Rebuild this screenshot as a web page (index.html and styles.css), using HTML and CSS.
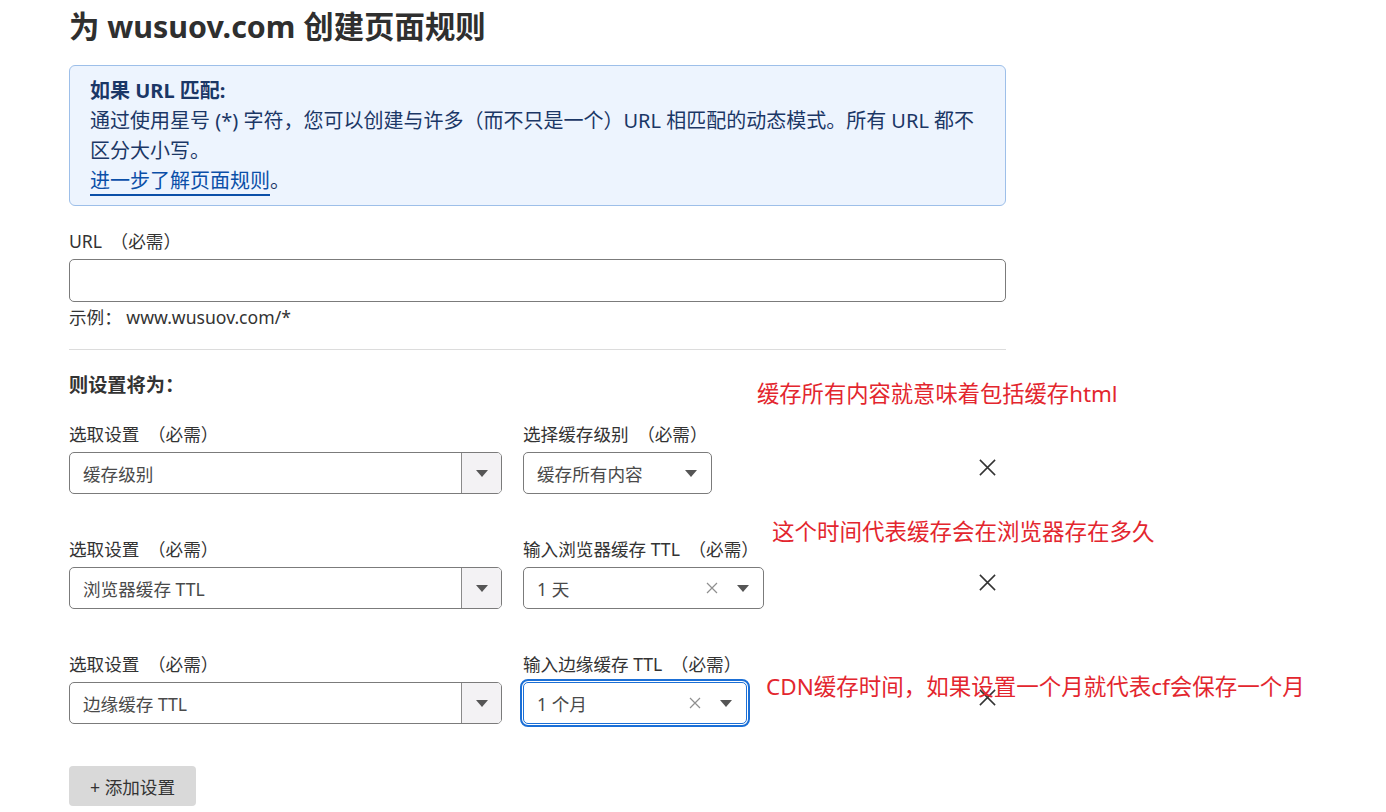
FILE: index.html
```html
<!DOCTYPE html>
<html lang="zh-CN">
<head>
<meta charset="utf-8">
<title>为 wusuov.com 创建页面规则</title>
<link rel="stylesheet" href="styles.css">
</head>
<body>
<div class="page">
  <h1 class="title">为 wusuov.com 创建页面规则</h1>

  <div class="info">
    <div class="info-head">如果 URL 匹配:</div>
    <p class="info-text">通过使用星号 (*) 字符，您可以创建与许多（而不只是一个）URL 相匹配的动态模式。所有 URL 都不区分大小写。</p>
    <p class="info-text"><a class="link" href="#">进一步了解页面规则</a>。</p>
  </div>

  <label class="label url-label">URL <span class="req">（必需）</span></label>
  <div class="text-input"></div>
  <div class="example">示例：&nbsp;www.wusuov.com/*</div>

  <div class="divider"></div>

  <div class="section-title">则设置将为：</div>

  <div class="rule">
    <div class="field">
      <div class="label">选取设置 <span class="req">（必需）</span></div>
      <div class="select big">
        <span class="value">缓存级别</span>
        <span class="btn"><span class="tri"></span></span>
      </div>
    </div>
    <div class="field">
      <div class="label">选择缓存级别 <span class="req">（必需）</span></div>
      <div class="select small w189">
        <span class="value">缓存所有内容</span>
        <span class="tri"></span>
      </div>
    </div>
    <div class="remove"><svg viewBox="0 0 20 20" width="20" height="20"><path d="M2 2 L18 18 M18 2 L2 18" stroke="#333" stroke-width="1.6" fill="none"/></svg></div>
  </div>

  <div class="rule">
    <div class="field">
      <div class="label">选取设置 <span class="req">（必需）</span></div>
      <div class="select big">
        <span class="value">浏览器缓存 TTL</span>
        <span class="btn"><span class="tri"></span></span>
      </div>
    </div>
    <div class="field">
      <div class="label">输入浏览器缓存 TTL <span class="req">（必需）</span></div>
      <div class="select small w241">
        <span class="value">1 天</span>
        <span class="clear"><svg viewBox="0 0 12 12" width="12" height="12"><path d="M1 1 L11 11 M11 1 L1 11" stroke="#8f8f8f" stroke-width="1.2" fill="none"/></svg></span>
        <span class="tri"></span>
      </div>
    </div>
    <div class="remove"><svg viewBox="0 0 20 20" width="20" height="20"><path d="M2 2 L18 18 M18 2 L2 18" stroke="#333" stroke-width="1.6" fill="none"/></svg></div>
  </div>

  <div class="rule">
    <div class="field">
      <div class="label">选取设置 <span class="req">（必需）</span></div>
      <div class="select big">
        <span class="value">边缘缓存 TTL</span>
        <span class="btn"><span class="tri"></span></span>
      </div>
    </div>
    <div class="field">
      <div class="label">输入边缘缓存 TTL <span class="req">（必需）</span></div>
      <div class="select small w224 focused">
        <span class="value">1 个月</span>
        <span class="clear"><svg viewBox="0 0 12 12" width="12" height="12"><path d="M1 1 L11 11 M11 1 L1 11" stroke="#8f8f8f" stroke-width="1.2" fill="none"/></svg></span>
        <span class="tri"></span>
      </div>
    </div>
    <div class="remove"><svg viewBox="0 0 20 20" width="20" height="20"><path d="M2 2 L18 18 M18 2 L2 18" stroke="#333" stroke-width="1.6" fill="none"/></svg></div>
  </div>

  <button class="add-btn">+ 添加设置</button>

  <div class="note note1">缓存所有内容就意味着包括缓存html</div>
  <div class="note note2">这个时间代表缓存会在浏览器存在多久</div>
  <div class="note note3">CDN缓存时间，如果设置一个月就代表cf会保存一个月</div>
</div>
</body>
</html>
```
FILE: styles.css
```css
* { box-sizing: border-box; }
html, body {
  margin: 0;
  padding: 0;
  background: #ffffff;
}
body {
  font-family: "Noto Sans", "Noto Sans CJK SC", sans-serif;
  color: #333333;
  font-size: 17.6px;
}
.page {
  position: relative;
  width: 1386px;
  height: 812px;
  padding-left: 69px;
  padding-top: 8px;
  overflow: hidden;
}
.title {
  margin: 0;
  font-size: 30.4px;
  line-height: 38px;
  font-weight: 700;
  color: #2f2f2f;
  height: 57px;
}
.info {
  width: 937px;
  background: #edf4fe;
  border: 1px solid #9dbfe9;
  border-radius: 6px;
  padding: 10px 20px 9px 20px;
  color: #1b3766;
  font-size: 20px;
  line-height: 30px;
}
.info-head { font-weight: 700; }
.info-text { margin: 0; }
.link {
  color: #0b4fa8;
  text-decoration: none;
  border-bottom: 2px solid #0b4fa8;
}
.label {
  display: block;
  font-size: 17.6px;
  line-height: 26px;
  color: #333;
  margin-bottom: 5px;
}
.url-label { margin-top: 22px; }
.req { margin-left: 4px; }
.text-input {
  width: 937px;
  height: 43px;
  border: 1px solid #7b7b7b;
  border-radius: 5px;
}
.example {
  margin-top: 2px;
  line-height: 26px;
  font-size: 17.6px;
  color: #333;
}
.divider {
  width: 937px;
  height: 1px;
  background: #dcdcdc;
  margin-top: 19px;
}
.section-title {
  margin-top: 20px;
  font-weight: 700;
  font-size: 19.2px;
  line-height: 30px;
  color: #333;
}
.rule {
  display: grid;
  grid-template-columns: 433px 433px 20px;
  column-gap: 21px;
  margin-top: 21px;
  align-items: end;
}
.rule + .rule { margin-top: 42px; }
.field { display: flex; flex-direction: column; }
.select {
  height: 42px;
  border: 1px solid #7b7b7b;
  border-radius: 5px;
  display: flex;
  align-items: center;
  color: #4a4a4a;
  font-size: 17.6px;
  background: #fff;
}
.select .value { flex: 1; padding-left: 13px; white-space: nowrap; }
.select.big .btn {
  width: 40px;
  height: 100%;
  border-left: 1px solid #8a8a8a;
  background: #f3f2f4;
  border-radius: 0 4px 4px 0;
  display: flex;
  align-items: center;
  justify-content: center;
}
.tri {
  width: 0;
  height: 0;
  border-left: 6px solid transparent;
  border-right: 6px solid transparent;
  border-top: 7px solid #555;
}
.select.small .tri { margin-right: 14px; }
.clear {
  display: flex;
  align-items: center;
  margin-right: 19px;
}
.w189 { width: 189px; }
.w241 { width: 241px; }
.w224 { width: 224px; }
.focused {
  border: 1px solid #1b6fd6;
  outline: 2px solid #1b6fd6;
  outline-offset: 1px;
}
.remove {
  height: 42px;
  display: flex;
  align-items: center;
  justify-content: center;
  padding-bottom: 12px;
}
.remove svg { width: 19px; height: 19px; }
.add-btn {
  display: block;
  margin-top: 42px;
  width: 127px;
  height: 40px;
  border: none;
  border-radius: 4px;
  background: #d9d9d9;
  color: #333;
  font-family: "Noto Sans", "Noto Sans CJK SC", sans-serif;
  font-size: 17.6px;
  text-align: left;
  padding-left: 21px;
}
.note {
  position: absolute;
  color: #e3262e;
  white-space: nowrap;
  line-height: 1.2;
}
.note1 { left: 757px; top: 381px; font-size: 22.3px; }
.note2 { left: 772px; top: 518px; font-size: 22.5px; }
.note3 { left: 766px; top: 673px; font-size: 22.5px; }
```
